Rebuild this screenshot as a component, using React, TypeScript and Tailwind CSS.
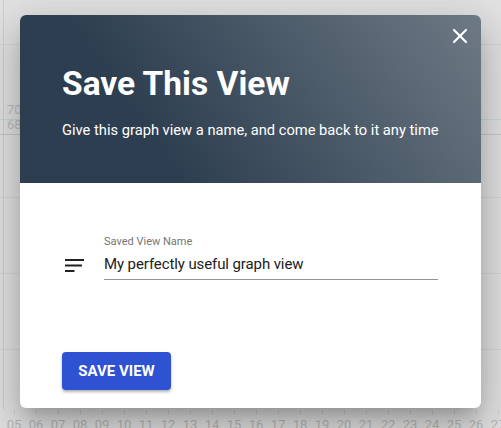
import { X } from "lucide-react";

const hours = Array.from({ length: 23 }, (_, i) => String(i + 5).padStart(2, "0"));

// faint chart sitting behind the modal
function ChartBackdrop() {
  return (
    <div className="absolute inset-0 bg-[#e2e2e2]">
      <div className="absolute left-[3px] top-0 h-[410px] w-px bg-[#cfcfcf]" />
      <div className="absolute left-0 right-0 top-[44px] h-px bg-[#d6d6d6]" />
      <div className="absolute left-0 right-0 top-[119px] h-px bg-[#c6dcd6]" />
      <div className="absolute left-0 right-0 top-[134px] h-px bg-[#c3c8cd]" />
      <div className="absolute left-0 right-0 top-[197px] h-px bg-[#d6d6d6]" />
      <div className="absolute left-0 right-0 top-[273px] h-px bg-[#d6d6d6]" />
      <div className="absolute left-0 right-0 top-[349px] h-px bg-[#d6d6d6]" />
      <div className="absolute left-[7px] top-[102px] flex flex-col text-[13px] leading-[15px] text-[#bdbdbd]">
        <span>70</span>
        <span>68</span>
      </div>
      <div className="absolute left-[3px] top-[410px] flex text-[13px] leading-[15px] text-[#b8b8b8]">
        {hours.map((h) => (
          <div key={h} className="flex w-[22px] flex-col items-center">
            <div className="h-[5px] w-px bg-[#cfcfcf]" />
            <span className="mt-[2px]">{h}</span>
          </div>
        ))}
      </div>
    </div>
  );
}

function NotesIcon() {
  return (
    <svg width="25" height="25" viewBox="0 0 25 25" className="mt-[19px] shrink-0">
      <rect x="3" y="6" width="19" height="2" fill="#212121" />
      <rect x="3" y="11.5" width="17" height="2" fill="#212121" />
      <rect x="3" y="17" width="9.5" height="2" fill="#212121" />
    </svg>
  );
}

export default function App() {
  return (
    <div
      className="relative h-[428px] w-[501px] overflow-hidden"
      style={{ fontFamily: "Roboto, 'Liberation Sans', sans-serif" }}
    >
      <ChartBackdrop />

      <div className="absolute left-[20px] top-[15px] flex h-[393px] w-[461px] flex-col overflow-hidden rounded-[6px] bg-white shadow-[0_11px_15px_-7px_rgba(0,0,0,0.2),0_24px_38px_3px_rgba(0,0,0,0.14),0_9px_46px_8px_rgba(0,0,0,0.12)]">
        <div className="relative h-[168px] shrink-0 bg-[linear-gradient(55deg,#2d3e50_28%,#6d7984_100%)] px-[42px] pt-[50px] text-white">
          <button className="absolute right-[9px] top-[9px] flex h-[24px] w-[24px] items-center justify-center text-white">
            <X size={24} strokeWidth={2.2} />
          </button>
          <h1 className="text-[33.5px] font-bold leading-[38px]">Save This View</h1>
          <p className="mt-[17px] whitespace-nowrap text-[14.7px] leading-[20px]">
            Give this graph view a name, and come back to it any time
          </p>
        </div>

        <div className="flex flex-1 flex-col pl-[42px] pr-[43px] pt-[51px]">
          <div className="flex gap-[17px]">
            <NotesIcon />
            <div className="flex flex-1 flex-col">
              <label className="text-[11px] leading-[16px] text-[#757575]">Saved View Name</label>
              <input
                defaultValue="My perfectly useful graph view"
                className="mt-[2px] border-b border-[#949494] pb-[3px] text-[15px] leading-[24px] tracking-[-0.1px] text-[#212121] outline-none"
              />
            </div>
          </div>

          <button className="mt-[72px] h-[38px] w-[109px] rounded-[4px] bg-[#2f52d3] text-[15px] font-bold text-white shadow-[0_2px_3px_rgba(0,0,0,0.3)]">
            SAVE VIEW
          </button>
        </div>
      </div>
    </div>
  );
}
